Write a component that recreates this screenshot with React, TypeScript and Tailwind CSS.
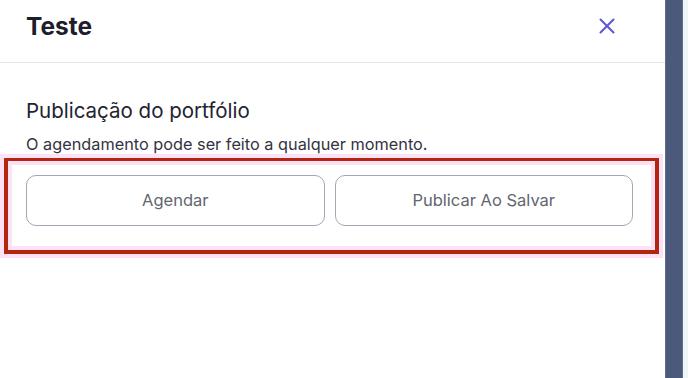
import { X } from 'lucide-react';

export default function App() {
  return (
    <div className="h-[378px] w-[688px] flex overflow-hidden bg-white" style={{ fontFamily: 'Inter, "Noto Sans", sans-serif' }}>
      {/* Drawer panel */}
      <div className="w-[665px] h-full flex flex-col bg-white">
        <div className="h-[63px] flex items-center justify-between pl-[26px] pr-[45px] border-b border-[#e6e7eb] shrink-0">
          <h1 className="text-[24.5px] leading-none font-bold text-[#1d1d2b] -mt-[10px]">Teste</h1>
          <button className="text-[#5a5ad8] -mt-[10px]">
            <X className="w-[26px] h-[26px]" strokeWidth={1.9} />
          </button>
        </div>

        <div className="pt-[34px]">
          <h2 className="px-[26px] text-[20.5px] leading-[28px] text-[#23232f]">Publicação do portfólio</h2>
          <p className="px-[26px] mt-[8px] text-[16.3px] leading-[22px] text-[#34343f]">
            O agendamento pode ser feito a qualquer momento.
          </p>

          {/* Highlighted block */}
          <div className="mt-[3px] ml-[4px] w-[655px] border-[4px] border-t-[3px] border-[#b2260f] shadow-[0_0_0_4px_#fde1f7,inset_0_0_0_4px_#fde1f7] pl-[18px] pr-[22px] pt-[14px] pb-[24px] flex gap-[10px]">
            <button className="flex-1 h-[51px] rounded-[10px] border border-[#a3a7b5] bg-white text-[16.5px] text-[#62666f]">
              Agendar
            </button>
            <button className="flex-1 h-[51px] rounded-[10px] border border-[#a3a7b5] bg-white text-[16.5px] text-[#62666f]">
              Publicar Ao Salvar
            </button>
          </div>
        </div>
      </div>

      {/* Scrollbar-ish strip */}
      <div className="w-[18px] h-full bg-[#4b5a7b] border-x border-[#5f6d8c]" />
      <div className="flex-1 h-full bg-[#eef6f7]" />
    </div>
  );
}
